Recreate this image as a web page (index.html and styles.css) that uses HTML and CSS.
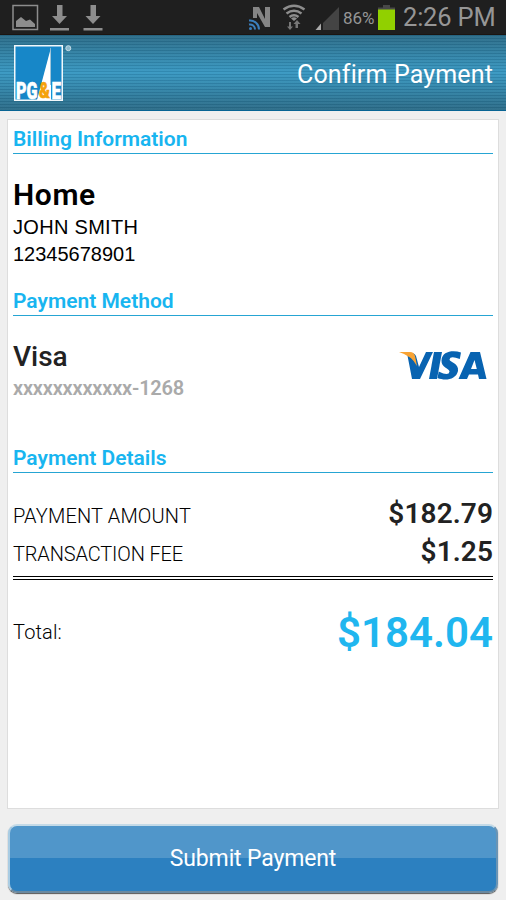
FILE: index.html
```html
<!DOCTYPE html>
<html lang="en">
<head>
    <meta charset="UTF-8">
    <meta name="viewport" content="width=device-width, initial-scale=1.0">
    <title>Confirm Payment</title>
    <link rel="stylesheet" href="styles.css">
</head>
<body>
    <div class="status-bar">
        <svg class="status-left" width="110" height="35" viewBox="0 0 110 35">
            <rect x="13" y="5.500" width="24.500" height="24" fill="none" stroke="#8d8d8d" stroke-width="1.500"/>
            <path d="M16 27V21L21 17L26 21L30 19.500L35 24V27Z" fill="#8d8d8d"/>
            <path d="M57 5H62.500V16H67L59.500 24L52 16H57ZM50 28H69V30.500H50Z" fill="#8d8d8d"/>
            <path d="M90.500 5H96V16H100.500L93 24L85.500 16H90.500ZM83.500 28H102.500V30.500H83.500Z" fill="#8d8d8d"/>
        </svg>
        <div class="status-right">
            <svg width="98" height="35" viewBox="244 0 98 35">
                <path d="M253 18V7H259L265 19V7H270V27H265L257 13V18Z" fill="#858585"/>
                <g fill="none" stroke="#3b7fbd" stroke-width="2">
                    <path d="M249 20.500A9 9 0 0 1 259 29.500M249 24.500A5 5 0 0 1 255 29.500"/>
                </g>
                <circle cx="250.500" cy="28.500" r="1.500" fill="#3b7fbd"/>
                <g fill="none" stroke="#8d8d8d" stroke-width="2.500">
                    <path d="M283.500 9.500Q294 2 304.500 9.500M286.500 13.500Q294 8 301.500 13.500M289.500 17Q294 13.500 298.500 17"/>
                </g>
                <path d="M291 18.500Q294 16 297 18.500L294 21Z" fill="#8d8d8d"/>
                <path d="M289 22H291V26.500H293L290 30L287 26.500H289ZM295.500 28V24H293.500L297 20L300.500 24H298V28Z" fill="#777"/>
                <path d="M339 7V30H323V23Z" fill="#444"/>
                <path d="M321 23.500V30H315.500Z" fill="#aaa"/>
            </svg>
            <span class="battery-level">86%</span>
            <svg class="battery" width="17" height="35" viewBox="0 0 17 35">
                <path d="M5 5H12V7.500H17V10H0V7.500H5Z" fill="#484848"/>
                <rect y="9.500" width="17" height="20.500" fill="#91d000"/>
            </svg>
            <span class="clock">2:26 PM</span>
        </div>
    </div>

    <div class="header">
        <svg class="logo" width="60" height="62" viewBox="0 0 60 62">
            <rect x="0.750" y="0.750" width="47.500" height="54.500" fill="#1787c8" stroke="#f2f8fb" stroke-width="1.500"/>
            <path d="M37 2.500V55H23Z" fill="#fff"/>
            <path d="M36.500 3V40" stroke="#8ab6cf" stroke-width="0.800"/>
            <g class="logo-text">
                <text x="2" y="53.500" textLength="21.500" lengthAdjust="spacingAndGlyphs">PG</text>
                <text x="25" y="53.300" class="logo-amp" textLength="11" lengthAdjust="spacingAndGlyphs">&amp;</text>
                <text x="37.500" y="53.500" textLength="9.500" lengthAdjust="spacingAndGlyphs">E</text>
            </g>
            <circle cx="54.300" cy="3.200" r="2.500" fill="#8ab9cd" stroke="#c4dce7" stroke-width="1"/>
        </svg>
        <h1>Confirm Payment</h1>
    </div>

    <div class="card">
        <h2>Billing Information</h2>
        <div class="billing">
            <div class="account">Home</div>
            <div class="name">JOHN SMITH</div>
            <div class="number">12345678901</div>
        </div>

        <h2>Payment Method</h2>
        <div class="method">
            <div>
                <div class="method-name">Visa</div>
                <div class="method-number">xxxxxxxxxxxx-1268</div>
            </div>
            <svg class="visa" width="90" height="32" viewBox="0 0 90 32">
                <path d="M8 3L13 29H21L34 2H27L20 17L17 6Q15 2 8 3Z" fill="#0863b1"/>
                <path d="M35 2H43L38 29H30Z" fill="#0863b1"/>
                <path d="M62 2.500L60.800 9Q51 5.500 50.500 9.500C50.500 12 60 13 59 21C57 30 46 31 38.500 28L39.700 21.500Q50 26.500 50.500 21.500C50.500 18.500 42 17.500 42.500 10.500C43 1 54 0 62 2.500Z" fill="#0863b1"/>
                <path d="M71.500 2H81L87.500 29H80L79 24.500H70L68 29H59.500ZM75.500 10L72 19H77.800Z" fill="#0863b1" fill-rule="evenodd"/>
                <path d="M0 2H11Q15 2 16 6L18 16Q13 6 0 2Z" fill="#f8a334"/>
            </svg>
        </div>

        <h2>Payment Details</h2>
        <div class="details">
            <div class="row">
                <span class="amount-label">PAYMENT AMOUNT</span>
                <span class="value">$182.79</span>
            </div>
            <div class="row">
                <span class="fee-label">TRANSACTION FEE</span>
                <span class="value">$1.25</span>
            </div>
        </div>
        <div class="total">
            <span class="total-label">Total:</span>
            <span class="total-value">$184.04</span>
        </div>
    </div>

    <button class="submit" type="button">Submit Payment</button>
</body>
</html>
```

FILE: styles.css
```css
* {
    box-sizing: border-box;
}
body {
    margin: 0;
    height: 900px;
    overflow: hidden;
    background-color: #efefef;
    font-family: Roboto, sans-serif;
    color: #222;
}
h1, h2 {
    margin: 0;
}
svg {
    display: block;
    flex: none;
}
.status-bar {
    display: flex;
    justify-content: space-between;
    height: 35px;
    padding-right: 11px;
    background-color: #1f1f1f;
    border-bottom: 1px solid #1b1511;
    color: #969696;
}
.status-right {
    display: flex;
    line-height: 35px;
}
.battery-level {
    width: 36px;
    padding-left: 1px;
    font-size: 17px;
    letter-spacing: -0.1px;
    line-height: 37px;
}
.clock {
    width: 92px;
    margin-left: 8px;
    font-size: 25.5px;
    letter-spacing: -0.2px;
    white-space: nowrap;
}
.header {
    display: flex;
    justify-content: space-between;
    height: 76px;
    padding: 10px 13px 0 14px;
    border-bottom: 1px solid #086493;
    background:
        repeating-linear-gradient(rgba(0, 35, 60, 0.12) 0 1px, rgba(255, 255, 255, 0.03) 1px 3px),
        linear-gradient(#2b6c88 0%, #3898c2 50%, #2b6c88 100%);
}
.header h1 {
    padding-top: 15px;
    font-size: 25px;
    font-weight: 400;
    line-height: 30px;
    letter-spacing: 0.15px;
    color: #fff;
}
.logo-text {
    font-family: Roboto, sans-serif;
    font-size: 24px;
    font-weight: 900;
    fill: #fff;
    stroke: #fff;
    stroke-width: 0.6px;
}
.logo-amp {
    font-size: 22px;
    fill: #f5a20a;
    stroke: #f5a20a;
}
.card {
    height: 690px;
    margin: 8px 7px 0;
    padding: 4px 5px 0;
    background-color: #fff;
    border: 1px solid #ddd;
}
.card h2 {
    height: 30px;
    font-size: 21px;
    font-weight: 600;
    line-height: 30px;
    color: #18b5f0;
    border-bottom: 1px solid #26a5d3;
}
.billing {
    height: 132px;
    padding-top: 22px;
    font-family: "Liberation Sans", Arial, sans-serif;
    font-size: 20px;
    line-height: 27px;
    color: #000;
}
.account {
    margin-bottom: 1px;
    font-family: Roboto, sans-serif;
    font-size: 30px;
    font-weight: 600;
    line-height: 37px;
    letter-spacing: 0.6px;
}
.name {
    letter-spacing: 0.3px;
}
.method {
    display: flex;
    justify-content: space-between;
    height: 127px;
    padding: 24px 4px 0 0;
}
.method-name {
    font-size: 28px;
    font-weight: 500;
    line-height: 34px;
}
.method-number {
    font-size: 20px;
    font-weight: 600;
    line-height: 28px;
    letter-spacing: -0.2px;
    color: #aaa;
}
.visa {
    margin-top: 10px;
}
.details {
    height: 107px;
    padding-top: 22px;
    border-bottom: 4px double #000;
}
.row {
    display: flex;
    justify-content: space-between;
    height: 38px;
    font-size: 20px;
    line-height: 43px;
}
.amount-label,
.fee-label,
.total-label {
    font-weight: 350;
    color: #000;
}
.amount-label,
.total-label {
    letter-spacing: 0.15px;
}
.fee-label {
    letter-spacing: -0.15px;
}
.value {
    font-size: 28px;
    font-weight: 600;
    line-height: 38px;
    letter-spacing: 0.1px;
}
.total {
    display: flex;
    justify-content: space-between;
    padding-top: 27px;
    font-size: 20px;
    line-height: 51px;
}
.total-value {
    font-size: 42px;
    font-weight: 600;
    color: #20b6ef;
}
.submit {
    display: block;
    width: 490px;
    height: 69px;
    margin: 15px 0 0 8px;
    padding: 0;
    border: 2px solid;
    border-color: #c4dae7 #6a94b4 #6a89a0 #a9cce3;
    border-radius: 9px;
    background: linear-gradient(#5096ca 0 50%, #2c80c0 50% 100%);
    box-shadow: 0 1px 1px #555;
    font-family: Roboto, sans-serif;
    font-size: 23px;
    letter-spacing: -0.15px;
    color: #fff;
}
```
